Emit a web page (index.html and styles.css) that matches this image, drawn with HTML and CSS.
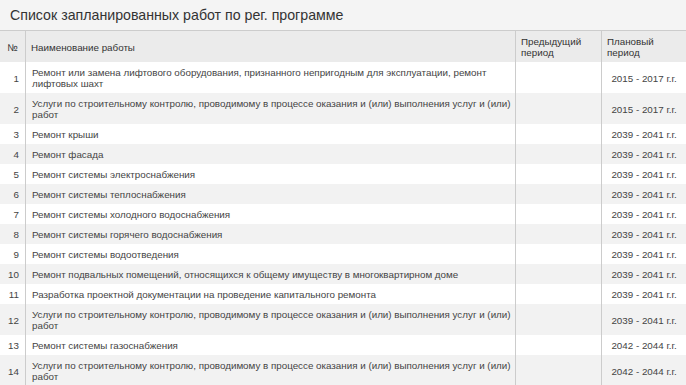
FILE: index.html
```html
<!DOCTYPE html>
<html lang="ru">
<head>
<meta charset="utf-8">
<title>Список запланированных работ</title>
<link rel="stylesheet" href="styles.css">
</head>
<body>
<div class="panel">
  <div class="panel-title">Список запланированных работ по рег. программе</div>
  <table class="works">
    <colgroup>
      <col class="c-num"><col class="c-name"><col class="c-prev"><col class="c-plan">
    </colgroup>
    <thead>
      <tr>
        <th class="num">№</th>
        <th>Наименование работы</th>
        <th>Предыдущий<br>период</th>
        <th>Плановый<br>период</th>
      </tr>
    </thead>
    <tbody>
      <tr><td class="num">1</td><td>Ремонт или замена лифтового оборудования, признанного непригодным для эксплуатации, ремонт<br>лифтовых шахт</td><td></td><td class="plan">2015 - 2017 г.г.</td></tr>
      <tr><td class="num">2</td><td>Услуги по строительному контролю, проводимому в процессе оказания и (или) выполнения услуг и (или)<br>работ</td><td></td><td class="plan">2015 - 2017 г.г.</td></tr>
      <tr><td class="num">3</td><td>Ремонт крыши</td><td></td><td class="plan">2039 - 2041 г.г.</td></tr>
      <tr><td class="num">4</td><td>Ремонт фасада</td><td></td><td class="plan">2039 - 2041 г.г.</td></tr>
      <tr><td class="num">5</td><td>Ремонт системы электроснабжения</td><td></td><td class="plan">2039 - 2041 г.г.</td></tr>
      <tr><td class="num">6</td><td>Ремонт системы теплоснабжения</td><td></td><td class="plan">2039 - 2041 г.г.</td></tr>
      <tr><td class="num">7</td><td>Ремонт системы холодного водоснабжения</td><td></td><td class="plan">2039 - 2041 г.г.</td></tr>
      <tr><td class="num">8</td><td>Ремонт системы горячего водоснабжения</td><td></td><td class="plan">2039 - 2041 г.г.</td></tr>
      <tr><td class="num">9</td><td>Ремонт системы водоотведения</td><td></td><td class="plan">2039 - 2041 г.г.</td></tr>
      <tr><td class="num">10</td><td>Ремонт подвальных помещений, относящихся к общему имуществу в многоквартирном доме</td><td></td><td class="plan">2039 - 2041 г.г.</td></tr>
      <tr><td class="num">11</td><td>Разработка проектной документации на проведение капитального ремонта</td><td></td><td class="plan">2039 - 2041 г.г.</td></tr>
      <tr><td class="num">12</td><td>Услуги по строительному контролю, проводимому в процессе оказания и (или) выполнения услуг и (или)<br>работ</td><td></td><td class="plan">2039 - 2041 г.г.</td></tr>
      <tr><td class="num">13</td><td>Ремонт системы газоснабжения</td><td></td><td class="plan">2042 - 2044 г.г.</td></tr>
      <tr><td class="num">14</td><td>Услуги по строительному контролю, проводимому в процессе оказания и (или) выполнения услуг и (или)<br>работ</td><td></td><td class="plan">2042 - 2044 г.г.</td></tr>
    </tbody>
  </table>
</div>
</body>
</html>
```
FILE: styles.css
```css
html, body {
  margin: 0;
  padding: 0;
  background: #ffffff;
}
body {
  font-family: "Liberation Sans", Arial, sans-serif;
  color: #444444;
}
.panel {
  width: 686px;
}
.panel-title {
  height: 30px;
  line-height: 31px;
  padding-left: 10px;
  font-size: 14.2px;
  color: #333333;
  background: #f4f4f4;
  border-bottom: 1px solid #cccccc;
  white-space: nowrap;
}
.works {
  width: 686px;
  table-layout: fixed;
  border-collapse: separate;
  border-spacing: 0;
  font-size: 9.8px;
  line-height: 11px;
}
.c-num { width: 26px; }
.c-name { width: 490px; }
.c-prev { width: 86px; }
.c-plan { width: 84px; }
.works th,
.works td {
  padding: 5px 6px 4px 6px;
  vertical-align: middle;
  text-align: left;
  white-space: nowrap;
  overflow: visible;
  border-right: 1px solid #cccccc;
}
.works th:last-child,
.works td:last-child {
  border-right: none;
}
.works th {
  font-weight: normal;
  color: #333333;
  background: #ebebeb;
  padding-left: 5px;
}
.works th.num {
  text-align: center;
  padding: 5px 0 4px 0;
}
.works td.num {
  text-align: right;
  padding-right: 6px;
  padding-left: 0;
}
.works td.plan {
  text-align: center;
  padding-left: 0;
  padding-right: 0;
}
.works tbody tr:nth-child(odd) td {
  background: #ffffff;
}
.works tbody tr:nth-child(even) td {
  background: #f2f2f2;
}
```
